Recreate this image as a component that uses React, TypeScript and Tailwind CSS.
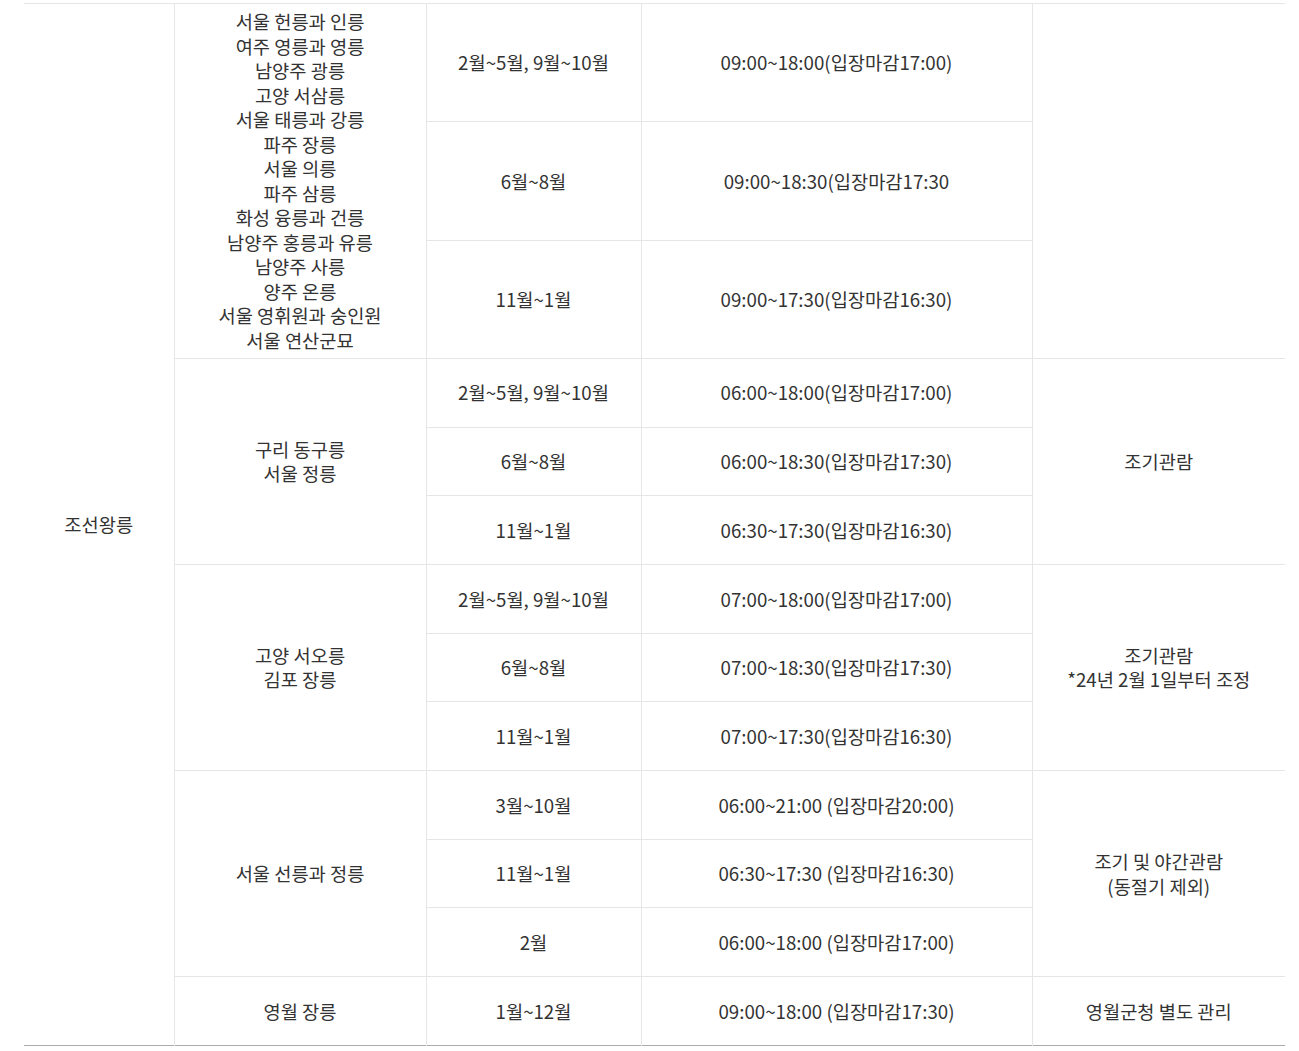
const font = { fontFamily: '"Noto Sans CJK KR", "Noto Sans", sans-serif' };

type Row = { period: string; hours: string };
type Group = { tombs: string[]; rows: Row[]; note: string[]; h: string };

const groups: Group[] = [
  {
    tombs: [
      "서울 헌릉과 인릉",
      "여주 영릉과 영릉",
      "남양주 광릉",
      "고양 서삼릉",
      "서울 태릉과 강릉",
      "파주 장릉",
      "서울 의릉",
      "파주 삼릉",
      "화성 융릉과 건릉",
      "남양주 홍릉과 유릉",
      "남양주 사릉",
      "양주 온릉",
      "서울 영휘원과 숭인원",
      "서울 연산군묘",
    ],
    rows: [
      { period: "2월~5월, 9월~10월", hours: "09:00~18:00(입장마감17:00)" },
      { period: "6월~8월", hours: "09:00~18:30(입장마감17:30" },
      { period: "11월~1월", hours: "09:00~17:30(입장마감16:30)" },
    ],
    note: [],
    h: "h-[118.3px]",
  },
  {
    tombs: ["구리 동구릉", "서울 정릉"],
    rows: [
      { period: "2월~5월, 9월~10월", hours: "06:00~18:00(입장마감17:00)" },
      { period: "6월~8월", hours: "06:00~18:30(입장마감17:30)" },
      { period: "11월~1월", hours: "06:30~17:30(입장마감16:30)" },
    ],
    note: ["조기관람"],
    h: "h-[68.7px]",
  },
  {
    tombs: ["고양 서오릉", "김포 장릉"],
    rows: [
      { period: "2월~5월, 9월~10월", hours: "07:00~18:00(입장마감17:00)" },
      { period: "6월~8월", hours: "07:00~18:30(입장마감17:30)" },
      { period: "11월~1월", hours: "07:00~17:30(입장마감16:30)" },
    ],
    note: ["조기관람", "*24년 2월 1일부터 조정"],
    h: "h-[68.7px]",
  },
  {
    tombs: ["서울 선릉과 정릉"],
    rows: [
      { period: "3월~10월", hours: "06:00~21:00 (입장마감20:00)" },
      { period: "11월~1월", hours: "06:30~17:30 (입장마감16:30)" },
      { period: "2월", hours: "06:00~18:00 (입장마감17:00)" },
    ],
    note: ["조기 및 야간관람", "(동절기 제외)"],
    h: "h-[68.7px]",
  },
  {
    tombs: ["영월 장릉"],
    rows: [{ period: "1월~12월", hours: "09:00~18:00 (입장마감17:30)" }],
    note: ["영월군청 별도 관리"],
    h: "h-[68.7px]",
  },
];

const cell = "border-t border-l border-[#e6e6e6] text-center align-middle p-0";

export default function App() {
  return (
    <div className="bg-white min-h-[1051px] pt-[3px] pl-6 pr-[14px]" style={font}>
      <table className="w-[1261px] table-fixed border-collapse text-[18.7px] leading-[24.5px] text-[#333] border-b border-b-[#ababab]">
        <colgroup>
          <col className="w-[150px]" />
          <col className="w-[252px]" />
          <col className="w-[215px]" />
          <col className="w-[391px]" />
          <col className="w-[253px]" />
        </colgroup>
        <tbody>
          {groups.map((g, gi) =>
            g.rows.map((r, ri) => (
              <tr key={`${gi}-${ri}`} className={g.h}>
                {gi === 0 && ri === 0 && (
                  <td rowSpan={13} className="border-t border-[#e6e6e6] text-center align-middle p-0">
                    조선왕릉
                  </td>
                )}
                {ri === 0 && (
                  <td rowSpan={g.rows.length} className={cell}>
                    {g.tombs.map((t) => (
                      <div key={t}>{t}</div>
                    ))}
                  </td>
                )}
                <td className={cell}>{r.period}</td>
                <td className={cell}>{r.hours}</td>
                {ri === 0 && (
                  <td rowSpan={g.rows.length} className={cell}>
                    {g.note.map((n) => (
                      <div key={n}>{n}</div>
                    ))}
                  </td>
                )}
              </tr>
            ))
          )}
        </tbody>
      </table>
    </div>
  );
}
